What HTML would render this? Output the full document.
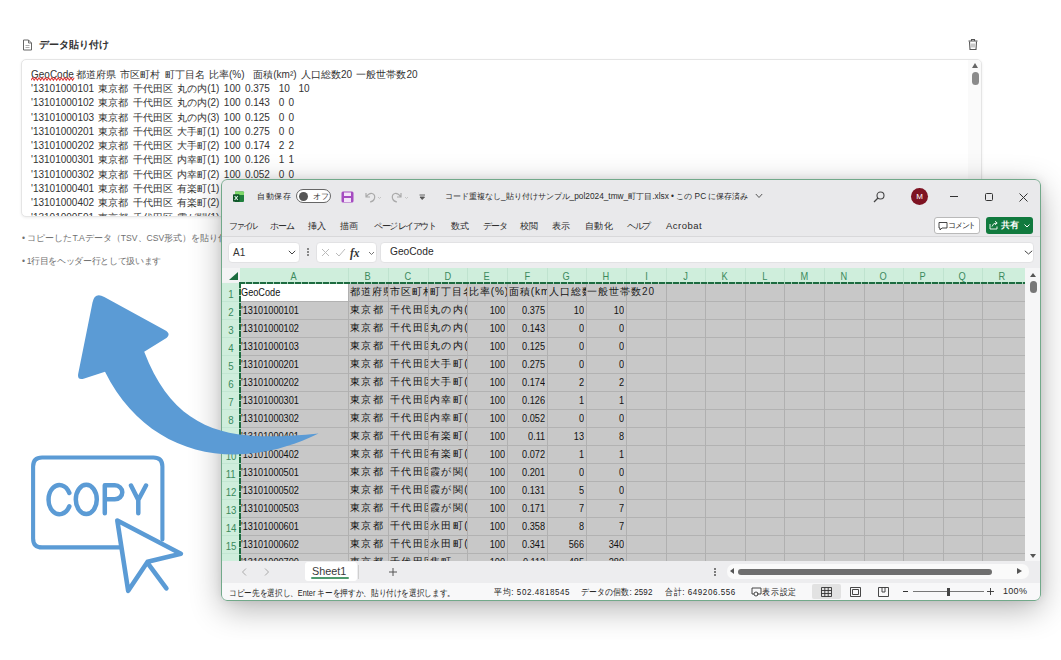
<!DOCTYPE html><html><head><meta charset="utf-8"><style>
*{margin:0;padding:0;box-sizing:border-box}
html,body{width:1061px;height:660px;overflow:hidden;background:#fff;font-family:"Liberation Sans", sans-serif;}
.a{position:absolute;white-space:nowrap}
</style></head><body>
<svg class="a" style="left:22px;top:39px" width="11" height="12" viewBox="0 0 11 12">
<path d="M1.5 1 H6.5 L9.5 4 V11 H1.5 Z" fill="none" stroke="#666" stroke-width="1"/>
<path d="M6.5 1 V4 H9.5" fill="none" stroke="#666" stroke-width="0.9"/>
<path d="M3.5 6.5 H7.5 M3.5 8.5 H7.5" stroke="#999" stroke-width="0.8"/></svg>
<div class="a" style="left:39px;top:38px;font-size:10px;font-weight:bold;color:#333;line-height:13px">データ貼り付け</div>
<svg class="a" style="left:967px;top:38px" width="12" height="13" viewBox="0 0 12 13">
<path d="M1.5 3 H10.5 M4.5 3 V1.5 H7.5 V3" fill="none" stroke="#555" stroke-width="1.1"/>
<path d="M2.5 3.5 L3 11.5 H9 L9.5 3.5" fill="none" stroke="#555" stroke-width="1.1"/>
<path d="M5 5.5 V9.5 M7 5.5 V9.5" stroke="#777" stroke-width="0.8"/></svg>
<div class="a" style="left:21px;top:59px;width:961px;height:158px;border:1px solid #e5e5e5;border-radius:5px;background:#fff;box-shadow:0 1px 3px rgba(0,0,0,0.07)"></div>
<div class="a" style="left:968px;top:60px;width:13px;height:156px;background:#fafafa;border-radius:0 4px 4px 0"></div>
<div class="a" style="left:972px;top:63px;width:0;height:0;border-left:3.5px solid transparent;border-right:3.5px solid transparent;border-bottom:5px solid #666"></div>
<div class="a" style="left:972px;top:72px;width:7px;height:13px;border-radius:4px;background:#8a8a8a"></div>
<div class="a" style="left:31px;top:67.7px;font-size:10px;line-height:14.3px;color:#333;word-spacing:1.6px;height:148.3px;overflow:hidden">GeoCode 都道府県 市区町村 町丁目名 比率(%)&nbsp; 面積(km²) 人口総数20 一般世帯数20<br>'13101000101 東京都 千代田区 丸の内(1) 100 0.375&nbsp; 10&nbsp; 10<br>'13101000102 東京都 千代田区 丸の内(2) 100 0.143&nbsp; 0 0<br>'13101000103 東京都 千代田区 丸の内(3) 100 0.125&nbsp; 0 0<br>'13101000201 東京都 千代田区 大手町(1) 100 0.275&nbsp; 0 0<br>'13101000202 東京都 千代田区 大手町(2) 100 0.174&nbsp; 2 2<br>'13101000301 東京都 千代田区 内幸町(1) 100 0.126&nbsp; 1 1<br>'13101000302 東京都 千代田区 内幸町(2) 100 0.052&nbsp; 0 0<br>'13101000401 東京都 千代田区 有楽町(1) 100 0.11&nbsp; 13 8<br>'13101000402 東京都 千代田区 有楽町(2) 100 0.072&nbsp; 1 1<br>'13101000501 東京都 千代田区 霞が関(1) 100 0.201&nbsp; 0 0</div>
<svg class="a" style="left:31px;top:77px" width="44" height="4.5" viewBox="0 0 44 4.5"><path d="M0 3.2 L1.6 0.8 L3.2 3.2 L4.8 0.8 L6.4 3.2 L8.0 0.8 L9.6 3.2 L11.2 0.8 L12.8 3.2 L14.4 0.8 L16.0 3.2 L17.6 0.8 L19.2 3.2 L20.8 0.8 L22.4 3.2 L24.0 0.8 L25.6 3.2 L27.2 0.8 L28.8 3.2 L30.4 0.8 L32.0 3.2 L33.6 0.8 L35.2 3.2 L36.8 0.8 L38.4 3.2 L40.0 0.8 L41.6 3.2 L43.2 0.8" fill="none" stroke="#e23b3b" stroke-width="1.1"/></svg>
<div class="a" style="left:22px;top:233px;font-size:8.6px;line-height:11px;color:#707070">• コピーしたT.Aデータ（TSV、CSV形式）を貼り付けてください</div>
<div class="a" style="left:22px;top:256px;font-size:8.6px;line-height:11px;color:#707070;letter-spacing:-0.35px">• 1行目をヘッダー行として扱います</div>
<div class="a" style="left:0;top:0;width:1061px;height:640px;overflow:hidden"><div class="a" style="left:222px;top:179px;width:819px;height:421px;border-radius:6px;box-shadow:0 9px 32px rgba(0,0,0,0.30),0 0 10px rgba(0,0,0,0.09)"></div></div>
<div class="a" style="left:221px;top:179px;width:820px;height:422px;border-radius:6px;overflow:hidden;background:#e9e9eb">
<div class="a" style="left:1px;top:0;width:819px;height:421px">
<div class="a" style="left:0;top:0;width:819px;height:57px;background:#e9e9eb"></div>
<svg class="a" style="left:11px;top:12px" width="12" height="12" viewBox="0 0 12 12">
<path d="M2 0.5 H10 Q11 0.5 11 1.5 V10 Q11 11 10 11 H2 Z" fill="#1f7f3c"/>
<path d="M2 0.5 H10 Q11 0.5 11 1.5 V4 H2 Z" fill="#7fd86a"/>
<rect x="0" y="3.3" width="6.5" height="7.4" rx="0.8" fill="#0d5226"/>
<path d="M1.6 5 L4.8 9 M4.8 5 L1.6 9" stroke="#d8f5e0" stroke-width="1.2"/></svg>
<div class="a" style="left:35px;top:12px;font-size:8px;line-height:11px;color:#2a2a2a;letter-spacing:0.5px">自動保存</div>
<div class="a" style="left:74px;top:10px;width:35px;height:14px;border:1px solid #666;border-radius:7px;background:#fff"></div>
<div class="a" style="left:76.5px;top:12.5px;width:9px;height:9px;border-radius:50%;background:#555"></div>
<div class="a" style="left:91px;top:12px;font-size:8px;line-height:11px;color:#333">オフ</div>
<svg class="a" style="left:119px;top:12px" width="13" height="12" viewBox="0 0 13 12">
<rect x="0.5" y="0.5" width="12" height="11" rx="1.5" fill="#a54bc1"/>
<rect x="3" y="1.5" width="7" height="3.5" fill="#f3e3f8"/>
<rect x="3" y="7" width="7" height="4" fill="#f3e3f8"/></svg>
<svg class="a" style="left:141px;top:11px" width="70" height="14" viewBox="0 0 70 14">
<path d="M3 3 V7 H7 M3 7 Q6 3 9 3.5 Q12.5 4.5 11.5 8.5 Q10.5 11.5 7 12" fill="none" stroke="#aaa" stroke-width="1.2"/>
<path d="M15 7 L16.5 8.5 L18 7" fill="none" stroke="#bbb" stroke-width="0.8"/>
<path d="M38 3 V7 H34 M38 7 Q35 3 32 3.5 Q28.5 4.5 29.5 8.5 Q30.5 11.5 34 12" fill="none" stroke="#aaa" stroke-width="1.2"/>
<path d="M42 7 L43.5 8.5 L45 7" fill="none" stroke="#bbb" stroke-width="0.8"/>
<path d="M56.5 5 H62 M57 7 L59.2 9.5 L61.5 7 Z" fill="#555" stroke="#555" stroke-width="0.9"/></svg>
<div class="a" style="left:223px;top:12px;font-size:8.3px;line-height:11px;color:#2a2a2a">コード重複なし_貼り付けサンプル_pol2024_tmw_町丁目.xlsx • この PC に保存済み</div>
<svg class="a" style="left:533px;top:14px" width="8" height="6" viewBox="0 0 8 6"><path d="M0.8 1 L4 4.5 L7.2 1" fill="none" stroke="#555" stroke-width="1"/></svg>
<svg class="a" style="left:651px;top:12px" width="12" height="12" viewBox="0 0 12 12">
<circle cx="7.5" cy="4.5" r="3.5" fill="none" stroke="#444" stroke-width="1.1"/><path d="M5 7 L1 11" stroke="#444" stroke-width="1.2"/></svg>
<div class="a" style="left:689px;top:9px;width:17px;height:17px;border-radius:50%;background:#7e1322;color:#fff;font-size:8px;line-height:17px;text-align:center">M</div>
<div class="a" style="left:728px;top:17px;width:8px;height:1px;background:#333"></div>
<div class="a" style="left:763px;top:14px;width:8px;height:8px;border:1px solid #333;border-radius:1.5px"></div>
<svg class="a" style="left:797px;top:14px" width="9" height="9" viewBox="0 0 9 9"><path d="M0.5 0.5 L8.5 8.5 M8.5 0.5 L0.5 8.5" stroke="#333" stroke-width="1"/></svg>
<div class="a" style="left:7px;top:41px;font-size:9px;line-height:12px;color:#2a2a2a;letter-spacing:-2.2px">ファイル</div>
<div class="a" style="left:48px;top:41px;font-size:9px;line-height:12px;color:#2a2a2a;letter-spacing:-1.2px">ホーム</div>
<div class="a" style="left:86px;top:41px;font-size:9px;line-height:12px;color:#2a2a2a;letter-spacing:0px">挿入</div>
<div class="a" style="left:118px;top:41px;font-size:9px;line-height:12px;color:#2a2a2a;letter-spacing:0px">描画</div>
<div class="a" style="left:152px;top:41px;font-size:9px;line-height:12px;color:#2a2a2a;letter-spacing:-1.5px">ページ レイアウト</div>
<div class="a" style="left:229px;top:41px;font-size:9px;line-height:12px;color:#2a2a2a;letter-spacing:0px">数式</div>
<div class="a" style="left:261px;top:41px;font-size:9px;line-height:12px;color:#2a2a2a;letter-spacing:-1px">データ</div>
<div class="a" style="left:298px;top:41px;font-size:9px;line-height:12px;color:#2a2a2a;letter-spacing:0px">校閲</div>
<div class="a" style="left:330px;top:41px;font-size:9px;line-height:12px;color:#2a2a2a;letter-spacing:0px">表示</div>
<div class="a" style="left:363px;top:41px;font-size:9px;line-height:12px;color:#2a2a2a;letter-spacing:0.4px">自動化</div>
<div class="a" style="left:405px;top:41px;font-size:9px;line-height:12px;color:#2a2a2a;letter-spacing:-1.3px">ヘルプ</div>
<div class="a" style="left:444px;top:41px;font-size:9.5px;line-height:12px;color:#2a2a2a;letter-spacing:0.5px">Acrobat</div>
<div class="a" style="left:712px;top:38px;width:46px;height:17px;border:1px solid #b9b9b9;border-radius:3px;background:#fff"></div>
<svg class="a" style="left:716px;top:42px" width="10" height="10" viewBox="0 0 10 10"><path d="M1 1.5 H9 V7 H4 L2 9 V7 H1 Z" fill="none" stroke="#333" stroke-width="0.9"/></svg>
<div class="a" style="left:726px;top:41px;font-size:8px;line-height:11px;color:#2a2a2a;letter-spacing:-1.2px">コメント</div>
<div class="a" style="left:764px;top:38px;width:47px;height:17px;border-radius:3px;background:#117a3e"></div>
<svg class="a" style="left:767px;top:41px" width="10" height="10" viewBox="0 0 10 10"><path d="M1 4 V9 H8 V6.5 M3 6.5 Q4 3 7.5 3 M6 1.2 L8.2 3 L6 4.8" fill="none" stroke="#fff" stroke-width="0.9"/></svg>
<div class="a" style="left:779px;top:40px;font-size:9px;font-weight:bold;line-height:12px;color:#fff">共有</div>
<svg class="a" style="left:802px;top:45px" width="6" height="4" viewBox="0 0 6 4"><path d="M0.5 0.5 L3 3 L5.5 0.5" fill="none" stroke="#fff" stroke-width="1"/></svg>
<div class="a" style="left:0;top:57px;width:819px;height:32px;background:#ededef;border-top:1px solid #d8d8da"></div>
<div class="a" style="left:6px;top:63px;width:72px;height:21px;border-radius:4px;background:#fff;border:1px solid #e2e2e4"></div>
<div class="a" style="left:11px;top:67px;font-size:10px;line-height:13px;color:#333">A1</div>
<svg class="a" style="left:66px;top:71px" width="8" height="5" viewBox="0 0 8 5"><path d="M0.8 0.8 L4 4 L7.2 0.8" fill="none" stroke="#444" stroke-width="1"/></svg>
<div class="a" style="left:85px;top:69px;width:2px;height:2px;background:#666;border-radius:1px;box-shadow:0 3px 0 #666,0 6px 0 #666"></div>
<div class="a" style="left:94px;top:63px;width:61px;height:21px;border-radius:4px;background:#fff;border:1px solid #e2e2e4"></div>
<svg class="a" style="left:97px;top:67px" width="56" height="14" viewBox="0 0 56 14">
<path d="M3 3 L10 10 M10 3 L3 10" stroke="#bbb" stroke-width="1"/>
<path d="M17 7 L20 10 L26 3" fill="none" stroke="#bbb" stroke-width="1"/>
<text x="31" y="11" font-family="Liberation Serif" font-style="italic" font-weight="bold" font-size="11.5" fill="#333">fx</text>
<path d="M50 6 L52.5 8.5 L55 6" fill="none" stroke="#666" stroke-width="0.9"/></svg>
<div class="a" style="left:158px;top:63px;width:654px;height:21px;border-radius:4px;background:#fff;border:1px solid #e2e2e4"></div>
<div class="a" style="left:168px;top:66px;font-size:10.2px;line-height:14px;color:#2a2a2a">GeoCode</div>
<svg class="a" style="left:802px;top:71px" width="9" height="5" viewBox="0 0 9 5"><path d="M0.8 0.8 L4.5 4 L8.2 0.8" fill="none" stroke="#444" stroke-width="1"/></svg>
<div class="a" style="left:0;top:89px;width:819px;height:293px;background:#f2f2f3"></div>
<div class="a" style="left:18px;top:89px;width:784.5px;height:14px;background:#cfeedc"></div>
<div class="a" style="left:0;top:89px;width:18px;height:14px;background:#f4f4f5"></div>
<div class="a" style="left:7px;top:93px;width:0;height:0;border-left:9px solid transparent;border-bottom:8px solid #1c6b3f"></div>
<div class="a" style="left:18.00px;top:91px;width:108.00px;font-size:10.5px;line-height:13px;color:#3a8a5c;text-align:center"><span style="display:inline-block;transform:scaleX(0.88)">A</span></div>
<div class="a" style="left:126.00px;top:91px;width:40.00px;font-size:10.5px;line-height:13px;color:#3a8a5c;text-align:center"><span style="display:inline-block;transform:scaleX(0.88)">B</span></div>
<div class="a" style="left:126px;top:89px;width:1px;height:14px;background:#bfe3cf"></div>
<div class="a" style="left:166.00px;top:91px;width:40.00px;font-size:10.5px;line-height:13px;color:#3a8a5c;text-align:center"><span style="display:inline-block;transform:scaleX(0.88)">C</span></div>
<div class="a" style="left:166px;top:89px;width:1px;height:14px;background:#bfe3cf"></div>
<div class="a" style="left:206.00px;top:91px;width:39.00px;font-size:10.5px;line-height:13px;color:#3a8a5c;text-align:center"><span style="display:inline-block;transform:scaleX(0.88)">D</span></div>
<div class="a" style="left:206px;top:89px;width:1px;height:14px;background:#bfe3cf"></div>
<div class="a" style="left:245.00px;top:91px;width:40.00px;font-size:10.5px;line-height:13px;color:#3a8a5c;text-align:center"><span style="display:inline-block;transform:scaleX(0.88)">E</span></div>
<div class="a" style="left:245px;top:89px;width:1px;height:14px;background:#bfe3cf"></div>
<div class="a" style="left:285.00px;top:91px;width:40.00px;font-size:10.5px;line-height:13px;color:#3a8a5c;text-align:center"><span style="display:inline-block;transform:scaleX(0.88)">F</span></div>
<div class="a" style="left:285px;top:89px;width:1px;height:14px;background:#bfe3cf"></div>
<div class="a" style="left:325.00px;top:91px;width:39.00px;font-size:10.5px;line-height:13px;color:#3a8a5c;text-align:center"><span style="display:inline-block;transform:scaleX(0.88)">G</span></div>
<div class="a" style="left:325px;top:89px;width:1px;height:14px;background:#bfe3cf"></div>
<div class="a" style="left:364.00px;top:91px;width:40.00px;font-size:10.5px;line-height:13px;color:#3a8a5c;text-align:center"><span style="display:inline-block;transform:scaleX(0.88)">H</span></div>
<div class="a" style="left:364px;top:89px;width:1px;height:14px;background:#bfe3cf"></div>
<div class="a" style="left:404.00px;top:91px;width:40.00px;font-size:10.5px;line-height:13px;color:#3a8a5c;text-align:center"><span style="display:inline-block;transform:scaleX(0.88)">I</span></div>
<div class="a" style="left:404px;top:89px;width:1px;height:14px;background:#bfe3cf"></div>
<div class="a" style="left:444.00px;top:91px;width:39.00px;font-size:10.5px;line-height:13px;color:#3a8a5c;text-align:center"><span style="display:inline-block;transform:scaleX(0.88)">J</span></div>
<div class="a" style="left:444px;top:89px;width:1px;height:14px;background:#bfe3cf"></div>
<div class="a" style="left:483.00px;top:91px;width:40.00px;font-size:10.5px;line-height:13px;color:#3a8a5c;text-align:center"><span style="display:inline-block;transform:scaleX(0.88)">K</span></div>
<div class="a" style="left:483px;top:89px;width:1px;height:14px;background:#bfe3cf"></div>
<div class="a" style="left:523.00px;top:91px;width:39.00px;font-size:10.5px;line-height:13px;color:#3a8a5c;text-align:center"><span style="display:inline-block;transform:scaleX(0.88)">L</span></div>
<div class="a" style="left:523px;top:89px;width:1px;height:14px;background:#bfe3cf"></div>
<div class="a" style="left:562.00px;top:91px;width:40.00px;font-size:10.5px;line-height:13px;color:#3a8a5c;text-align:center"><span style="display:inline-block;transform:scaleX(0.88)">M</span></div>
<div class="a" style="left:562px;top:89px;width:1px;height:14px;background:#bfe3cf"></div>
<div class="a" style="left:602.00px;top:91px;width:40.00px;font-size:10.5px;line-height:13px;color:#3a8a5c;text-align:center"><span style="display:inline-block;transform:scaleX(0.88)">N</span></div>
<div class="a" style="left:602px;top:89px;width:1px;height:14px;background:#bfe3cf"></div>
<div class="a" style="left:642.00px;top:91px;width:39.00px;font-size:10.5px;line-height:13px;color:#3a8a5c;text-align:center"><span style="display:inline-block;transform:scaleX(0.88)">O</span></div>
<div class="a" style="left:642px;top:89px;width:1px;height:14px;background:#bfe3cf"></div>
<div class="a" style="left:681.00px;top:91px;width:40.00px;font-size:10.5px;line-height:13px;color:#3a8a5c;text-align:center"><span style="display:inline-block;transform:scaleX(0.88)">P</span></div>
<div class="a" style="left:681px;top:89px;width:1px;height:14px;background:#bfe3cf"></div>
<div class="a" style="left:721.00px;top:91px;width:39.00px;font-size:10.5px;line-height:13px;color:#3a8a5c;text-align:center"><span style="display:inline-block;transform:scaleX(0.88)">Q</span></div>
<div class="a" style="left:721px;top:89px;width:1px;height:14px;background:#bfe3cf"></div>
<div class="a" style="left:760.00px;top:91px;width:40.00px;font-size:10.5px;line-height:13px;color:#3a8a5c;text-align:center"><span style="display:inline-block;transform:scaleX(0.88)">R</span></div>
<div class="a" style="left:760px;top:89px;width:1px;height:14px;background:#bfe3cf"></div>
<div class="a" style="left:0;top:104px;width:18px;height:278px;background:#cfeedc"></div>
<div class="a" style="left:18px;top:104px;width:784.5px;height:278px;background:#c8c8c8"></div>
<div class="a" style="left:18px;top:105px;width:108px;height:17px;background:#fff"></div>
<div class="a" style="left:0;top:122px;width:802.5px;height:1px;background:#b2b2b2"></div>
<div class="a" style="left:0;top:122px;width:18px;height:1px;background:#c2e6d2"></div>
<div class="a" style="left:0;top:140px;width:802.5px;height:1px;background:#b2b2b2"></div>
<div class="a" style="left:0;top:140px;width:18px;height:1px;background:#c2e6d2"></div>
<div class="a" style="left:0;top:158px;width:802.5px;height:1px;background:#b2b2b2"></div>
<div class="a" style="left:0;top:158px;width:18px;height:1px;background:#c2e6d2"></div>
<div class="a" style="left:0;top:176px;width:802.5px;height:1px;background:#b2b2b2"></div>
<div class="a" style="left:0;top:176px;width:18px;height:1px;background:#c2e6d2"></div>
<div class="a" style="left:0;top:194px;width:802.5px;height:1px;background:#b2b2b2"></div>
<div class="a" style="left:0;top:194px;width:18px;height:1px;background:#c2e6d2"></div>
<div class="a" style="left:0;top:212px;width:802.5px;height:1px;background:#b2b2b2"></div>
<div class="a" style="left:0;top:212px;width:18px;height:1px;background:#c2e6d2"></div>
<div class="a" style="left:0;top:230px;width:802.5px;height:1px;background:#b2b2b2"></div>
<div class="a" style="left:0;top:230px;width:18px;height:1px;background:#c2e6d2"></div>
<div class="a" style="left:0;top:248px;width:802.5px;height:1px;background:#b2b2b2"></div>
<div class="a" style="left:0;top:248px;width:18px;height:1px;background:#c2e6d2"></div>
<div class="a" style="left:0;top:266px;width:802.5px;height:1px;background:#b2b2b2"></div>
<div class="a" style="left:0;top:266px;width:18px;height:1px;background:#c2e6d2"></div>
<div class="a" style="left:0;top:284px;width:802.5px;height:1px;background:#b2b2b2"></div>
<div class="a" style="left:0;top:284px;width:18px;height:1px;background:#c2e6d2"></div>
<div class="a" style="left:0;top:302px;width:802.5px;height:1px;background:#b2b2b2"></div>
<div class="a" style="left:0;top:302px;width:18px;height:1px;background:#c2e6d2"></div>
<div class="a" style="left:0;top:320px;width:802.5px;height:1px;background:#b2b2b2"></div>
<div class="a" style="left:0;top:320px;width:18px;height:1px;background:#c2e6d2"></div>
<div class="a" style="left:0;top:338px;width:802.5px;height:1px;background:#b2b2b2"></div>
<div class="a" style="left:0;top:338px;width:18px;height:1px;background:#c2e6d2"></div>
<div class="a" style="left:0;top:356px;width:802.5px;height:1px;background:#b2b2b2"></div>
<div class="a" style="left:0;top:356px;width:18px;height:1px;background:#c2e6d2"></div>
<div class="a" style="left:0;top:374px;width:802.5px;height:1px;background:#b2b2b2"></div>
<div class="a" style="left:0;top:374px;width:18px;height:1px;background:#c2e6d2"></div>
<div class="a" style="left:126px;top:104px;width:1px;height:278px;background:#b0b0b0"></div>
<div class="a" style="left:166px;top:104px;width:1px;height:278px;background:#b0b0b0"></div>
<div class="a" style="left:206px;top:104px;width:1px;height:278px;background:#b0b0b0"></div>
<div class="a" style="left:245px;top:104px;width:1px;height:278px;background:#b0b0b0"></div>
<div class="a" style="left:285px;top:104px;width:1px;height:278px;background:#b0b0b0"></div>
<div class="a" style="left:325px;top:104px;width:1px;height:278px;background:#b0b0b0"></div>
<div class="a" style="left:364px;top:104px;width:1px;height:278px;background:#b0b0b0"></div>
<div class="a" style="left:404px;top:104px;width:1px;height:278px;background:#b0b0b0"></div>
<div class="a" style="left:444px;top:104px;width:1px;height:278px;background:#b0b0b0"></div>
<div class="a" style="left:483px;top:104px;width:1px;height:278px;background:#b0b0b0"></div>
<div class="a" style="left:523px;top:104px;width:1px;height:278px;background:#b0b0b0"></div>
<div class="a" style="left:562px;top:104px;width:1px;height:278px;background:#b0b0b0"></div>
<div class="a" style="left:602px;top:104px;width:1px;height:278px;background:#b0b0b0"></div>
<div class="a" style="left:642px;top:104px;width:1px;height:278px;background:#b0b0b0"></div>
<div class="a" style="left:681px;top:104px;width:1px;height:278px;background:#b0b0b0"></div>
<div class="a" style="left:721px;top:104px;width:1px;height:278px;background:#b0b0b0"></div>
<div class="a" style="left:760px;top:104px;width:1px;height:278px;background:#b0b0b0"></div>
<div class="a" style="left:0;top:108.5px;width:18px;font-size:11px;line-height:13px;color:#3a8a5c;text-align:center"><span style="display:inline-block;transform:scaleX(0.88)">1</span></div>
<div class="a" style="left:0;top:126.5px;width:18px;font-size:11px;line-height:13px;color:#3a8a5c;text-align:center"><span style="display:inline-block;transform:scaleX(0.88)">2</span></div>
<div class="a" style="left:0;top:144.5px;width:18px;font-size:11px;line-height:13px;color:#3a8a5c;text-align:center"><span style="display:inline-block;transform:scaleX(0.88)">3</span></div>
<div class="a" style="left:0;top:162.5px;width:18px;font-size:11px;line-height:13px;color:#3a8a5c;text-align:center"><span style="display:inline-block;transform:scaleX(0.88)">4</span></div>
<div class="a" style="left:0;top:180.5px;width:18px;font-size:11px;line-height:13px;color:#3a8a5c;text-align:center"><span style="display:inline-block;transform:scaleX(0.88)">5</span></div>
<div class="a" style="left:0;top:198.5px;width:18px;font-size:11px;line-height:13px;color:#3a8a5c;text-align:center"><span style="display:inline-block;transform:scaleX(0.88)">6</span></div>
<div class="a" style="left:0;top:216.5px;width:18px;font-size:11px;line-height:13px;color:#3a8a5c;text-align:center"><span style="display:inline-block;transform:scaleX(0.88)">7</span></div>
<div class="a" style="left:0;top:234.5px;width:18px;font-size:11px;line-height:13px;color:#3a8a5c;text-align:center"><span style="display:inline-block;transform:scaleX(0.88)">8</span></div>
<div class="a" style="left:0;top:252.5px;width:18px;font-size:11px;line-height:13px;color:#3a8a5c;text-align:center"><span style="display:inline-block;transform:scaleX(0.88)">9</span></div>
<div class="a" style="left:0;top:270.5px;width:18px;font-size:11px;line-height:13px;color:#3a8a5c;text-align:center"><span style="display:inline-block;transform:scaleX(0.88)">10</span></div>
<div class="a" style="left:0;top:288.5px;width:18px;font-size:11px;line-height:13px;color:#3a8a5c;text-align:center"><span style="display:inline-block;transform:scaleX(0.88)">11</span></div>
<div class="a" style="left:0;top:306.5px;width:18px;font-size:11px;line-height:13px;color:#3a8a5c;text-align:center"><span style="display:inline-block;transform:scaleX(0.88)">12</span></div>
<div class="a" style="left:0;top:324.5px;width:18px;font-size:11px;line-height:13px;color:#3a8a5c;text-align:center"><span style="display:inline-block;transform:scaleX(0.88)">13</span></div>
<div class="a" style="left:0;top:342.5px;width:18px;font-size:11px;line-height:13px;color:#3a8a5c;text-align:center"><span style="display:inline-block;transform:scaleX(0.88)">14</span></div>
<div class="a" style="left:0;top:360.5px;width:18px;font-size:11px;line-height:13px;color:#3a8a5c;text-align:center"><span style="display:inline-block;transform:scaleX(0.88)">15</span></div>
<div class="a" style="left:19.00px;top:106px;width:107.00px;font-size:10.8px;line-height:14px;color:#111;overflow:hidden"><span style="display:inline-block;transform:scaleX(0.85);transform-origin:0 50%">GeoCode</span></div>
<div class="a" style="left:127.00px;top:106px;width:39.00px;font-size:10px;line-height:14px;color:#111;overflow:hidden"><span style="display:inline-block;margin-left:1px;letter-spacing:0.9px">都道府県</span></div>
<div class="a" style="left:167.00px;top:106px;width:39.00px;font-size:10px;line-height:14px;color:#111;overflow:hidden"><span style="display:inline-block;margin-left:1px;letter-spacing:0.9px">市区町村</span></div>
<div class="a" style="left:207.00px;top:106px;width:38.00px;font-size:10px;line-height:14px;color:#111;overflow:hidden"><span style="display:inline-block;margin-left:1px;letter-spacing:0.9px">町丁目名</span></div>
<div class="a" style="left:246.00px;top:106px;width:39.00px;font-size:10px;line-height:14px;color:#111;overflow:hidden"><span style="display:inline-block;margin-left:1px;letter-spacing:0.9px">比率(%)</span></div>
<div class="a" style="left:286.00px;top:106px;width:39.00px;font-size:10px;line-height:14px;color:#111;overflow:hidden"><span style="display:inline-block;margin-left:1px;letter-spacing:0.9px">面積(km²)</span></div>
<div class="a" style="left:326.00px;top:106px;width:38.00px;font-size:10px;line-height:14px;color:#111;overflow:hidden"><span style="display:inline-block;margin-left:1px;letter-spacing:0.9px">人口総数20</span></div>
<div class="a" style="left:365.00px;top:106px;font-size:10px;line-height:14px;color:#222;letter-spacing:1px">一般世帯数20</div>
<div class="a" style="left:19.00px;top:124px;width:107.00px;font-size:10.8px;line-height:14px;color:#111;overflow:hidden"><span style="display:inline-block;transform:scaleX(0.85);transform-origin:0 50%">'13101000101</span></div>
<div class="a" style="left:127.00px;top:124px;width:39.00px;font-size:10px;line-height:14px;color:#111;overflow:hidden"><span style="display:inline-block;margin-left:1px;letter-spacing:1.4px">東京都</span></div>
<div class="a" style="left:167.00px;top:124px;width:39.00px;font-size:10px;line-height:14px;color:#111;overflow:hidden"><span style="display:inline-block;margin-left:1px;letter-spacing:1.4px">千代田区</span></div>
<div class="a" style="left:207.00px;top:124px;width:38.00px;font-size:10px;line-height:14px;color:#111;overflow:hidden"><span style="display:inline-block;margin-left:1px;letter-spacing:1.4px">丸の内(1)</span></div>
<div class="a" style="left:245.00px;top:124px;width:38.00px;font-size:10.8px;line-height:14px;color:#111;text-align:right;overflow:hidden"><span style="display:inline-block;transform:scaleX(0.85);transform-origin:100% 50%">100</span></div>
<div class="a" style="left:285.00px;top:124px;width:38.00px;font-size:10.8px;line-height:14px;color:#111;text-align:right;overflow:hidden"><span style="display:inline-block;transform:scaleX(0.85);transform-origin:100% 50%">0.375</span></div>
<div class="a" style="left:325.00px;top:124px;width:37.00px;font-size:10.8px;line-height:14px;color:#111;text-align:right;overflow:hidden"><span style="display:inline-block;transform:scaleX(0.85);transform-origin:100% 50%">10</span></div>
<div class="a" style="left:364.00px;top:124px;width:38.00px;font-size:10.8px;line-height:14px;color:#111;text-align:right;overflow:hidden"><span style="display:inline-block;transform:scaleX(0.85);transform-origin:100% 50%">10</span></div>
<div class="a" style="left:19.00px;top:142px;width:107.00px;font-size:10.8px;line-height:14px;color:#111;overflow:hidden"><span style="display:inline-block;transform:scaleX(0.85);transform-origin:0 50%">'13101000102</span></div>
<div class="a" style="left:127.00px;top:142px;width:39.00px;font-size:10px;line-height:14px;color:#111;overflow:hidden"><span style="display:inline-block;margin-left:1px;letter-spacing:1.4px">東京都</span></div>
<div class="a" style="left:167.00px;top:142px;width:39.00px;font-size:10px;line-height:14px;color:#111;overflow:hidden"><span style="display:inline-block;margin-left:1px;letter-spacing:1.4px">千代田区</span></div>
<div class="a" style="left:207.00px;top:142px;width:38.00px;font-size:10px;line-height:14px;color:#111;overflow:hidden"><span style="display:inline-block;margin-left:1px;letter-spacing:1.4px">丸の内(2)</span></div>
<div class="a" style="left:245.00px;top:142px;width:38.00px;font-size:10.8px;line-height:14px;color:#111;text-align:right;overflow:hidden"><span style="display:inline-block;transform:scaleX(0.85);transform-origin:100% 50%">100</span></div>
<div class="a" style="left:285.00px;top:142px;width:38.00px;font-size:10.8px;line-height:14px;color:#111;text-align:right;overflow:hidden"><span style="display:inline-block;transform:scaleX(0.85);transform-origin:100% 50%">0.143</span></div>
<div class="a" style="left:325.00px;top:142px;width:37.00px;font-size:10.8px;line-height:14px;color:#111;text-align:right;overflow:hidden"><span style="display:inline-block;transform:scaleX(0.85);transform-origin:100% 50%">0</span></div>
<div class="a" style="left:364.00px;top:142px;width:38.00px;font-size:10.8px;line-height:14px;color:#111;text-align:right;overflow:hidden"><span style="display:inline-block;transform:scaleX(0.85);transform-origin:100% 50%">0</span></div>
<div class="a" style="left:19.00px;top:160px;width:107.00px;font-size:10.8px;line-height:14px;color:#111;overflow:hidden"><span style="display:inline-block;transform:scaleX(0.85);transform-origin:0 50%">'13101000103</span></div>
<div class="a" style="left:127.00px;top:160px;width:39.00px;font-size:10px;line-height:14px;color:#111;overflow:hidden"><span style="display:inline-block;margin-left:1px;letter-spacing:1.4px">東京都</span></div>
<div class="a" style="left:167.00px;top:160px;width:39.00px;font-size:10px;line-height:14px;color:#111;overflow:hidden"><span style="display:inline-block;margin-left:1px;letter-spacing:1.4px">千代田区</span></div>
<div class="a" style="left:207.00px;top:160px;width:38.00px;font-size:10px;line-height:14px;color:#111;overflow:hidden"><span style="display:inline-block;margin-left:1px;letter-spacing:1.4px">丸の内(3)</span></div>
<div class="a" style="left:245.00px;top:160px;width:38.00px;font-size:10.8px;line-height:14px;color:#111;text-align:right;overflow:hidden"><span style="display:inline-block;transform:scaleX(0.85);transform-origin:100% 50%">100</span></div>
<div class="a" style="left:285.00px;top:160px;width:38.00px;font-size:10.8px;line-height:14px;color:#111;text-align:right;overflow:hidden"><span style="display:inline-block;transform:scaleX(0.85);transform-origin:100% 50%">0.125</span></div>
<div class="a" style="left:325.00px;top:160px;width:37.00px;font-size:10.8px;line-height:14px;color:#111;text-align:right;overflow:hidden"><span style="display:inline-block;transform:scaleX(0.85);transform-origin:100% 50%">0</span></div>
<div class="a" style="left:364.00px;top:160px;width:38.00px;font-size:10.8px;line-height:14px;color:#111;text-align:right;overflow:hidden"><span style="display:inline-block;transform:scaleX(0.85);transform-origin:100% 50%">0</span></div>
<div class="a" style="left:19.00px;top:178px;width:107.00px;font-size:10.8px;line-height:14px;color:#111;overflow:hidden"><span style="display:inline-block;transform:scaleX(0.85);transform-origin:0 50%">'13101000201</span></div>
<div class="a" style="left:127.00px;top:178px;width:39.00px;font-size:10px;line-height:14px;color:#111;overflow:hidden"><span style="display:inline-block;margin-left:1px;letter-spacing:1.4px">東京都</span></div>
<div class="a" style="left:167.00px;top:178px;width:39.00px;font-size:10px;line-height:14px;color:#111;overflow:hidden"><span style="display:inline-block;margin-left:1px;letter-spacing:1.4px">千代田区</span></div>
<div class="a" style="left:207.00px;top:178px;width:38.00px;font-size:10px;line-height:14px;color:#111;overflow:hidden"><span style="display:inline-block;margin-left:1px;letter-spacing:1.4px">大手町(1)</span></div>
<div class="a" style="left:245.00px;top:178px;width:38.00px;font-size:10.8px;line-height:14px;color:#111;text-align:right;overflow:hidden"><span style="display:inline-block;transform:scaleX(0.85);transform-origin:100% 50%">100</span></div>
<div class="a" style="left:285.00px;top:178px;width:38.00px;font-size:10.8px;line-height:14px;color:#111;text-align:right;overflow:hidden"><span style="display:inline-block;transform:scaleX(0.85);transform-origin:100% 50%">0.275</span></div>
<div class="a" style="left:325.00px;top:178px;width:37.00px;font-size:10.8px;line-height:14px;color:#111;text-align:right;overflow:hidden"><span style="display:inline-block;transform:scaleX(0.85);transform-origin:100% 50%">0</span></div>
<div class="a" style="left:364.00px;top:178px;width:38.00px;font-size:10.8px;line-height:14px;color:#111;text-align:right;overflow:hidden"><span style="display:inline-block;transform:scaleX(0.85);transform-origin:100% 50%">0</span></div>
<div class="a" style="left:19.00px;top:196px;width:107.00px;font-size:10.8px;line-height:14px;color:#111;overflow:hidden"><span style="display:inline-block;transform:scaleX(0.85);transform-origin:0 50%">'13101000202</span></div>
<div class="a" style="left:127.00px;top:196px;width:39.00px;font-size:10px;line-height:14px;color:#111;overflow:hidden"><span style="display:inline-block;margin-left:1px;letter-spacing:1.4px">東京都</span></div>
<div class="a" style="left:167.00px;top:196px;width:39.00px;font-size:10px;line-height:14px;color:#111;overflow:hidden"><span style="display:inline-block;margin-left:1px;letter-spacing:1.4px">千代田区</span></div>
<div class="a" style="left:207.00px;top:196px;width:38.00px;font-size:10px;line-height:14px;color:#111;overflow:hidden"><span style="display:inline-block;margin-left:1px;letter-spacing:1.4px">大手町(2)</span></div>
<div class="a" style="left:245.00px;top:196px;width:38.00px;font-size:10.8px;line-height:14px;color:#111;text-align:right;overflow:hidden"><span style="display:inline-block;transform:scaleX(0.85);transform-origin:100% 50%">100</span></div>
<div class="a" style="left:285.00px;top:196px;width:38.00px;font-size:10.8px;line-height:14px;color:#111;text-align:right;overflow:hidden"><span style="display:inline-block;transform:scaleX(0.85);transform-origin:100% 50%">0.174</span></div>
<div class="a" style="left:325.00px;top:196px;width:37.00px;font-size:10.8px;line-height:14px;color:#111;text-align:right;overflow:hidden"><span style="display:inline-block;transform:scaleX(0.85);transform-origin:100% 50%">2</span></div>
<div class="a" style="left:364.00px;top:196px;width:38.00px;font-size:10.8px;line-height:14px;color:#111;text-align:right;overflow:hidden"><span style="display:inline-block;transform:scaleX(0.85);transform-origin:100% 50%">2</span></div>
<div class="a" style="left:19.00px;top:214px;width:107.00px;font-size:10.8px;line-height:14px;color:#111;overflow:hidden"><span style="display:inline-block;transform:scaleX(0.85);transform-origin:0 50%">'13101000301</span></div>
<div class="a" style="left:127.00px;top:214px;width:39.00px;font-size:10px;line-height:14px;color:#111;overflow:hidden"><span style="display:inline-block;margin-left:1px;letter-spacing:1.4px">東京都</span></div>
<div class="a" style="left:167.00px;top:214px;width:39.00px;font-size:10px;line-height:14px;color:#111;overflow:hidden"><span style="display:inline-block;margin-left:1px;letter-spacing:1.4px">千代田区</span></div>
<div class="a" style="left:207.00px;top:214px;width:38.00px;font-size:10px;line-height:14px;color:#111;overflow:hidden"><span style="display:inline-block;margin-left:1px;letter-spacing:1.4px">内幸町(1)</span></div>
<div class="a" style="left:245.00px;top:214px;width:38.00px;font-size:10.8px;line-height:14px;color:#111;text-align:right;overflow:hidden"><span style="display:inline-block;transform:scaleX(0.85);transform-origin:100% 50%">100</span></div>
<div class="a" style="left:285.00px;top:214px;width:38.00px;font-size:10.8px;line-height:14px;color:#111;text-align:right;overflow:hidden"><span style="display:inline-block;transform:scaleX(0.85);transform-origin:100% 50%">0.126</span></div>
<div class="a" style="left:325.00px;top:214px;width:37.00px;font-size:10.8px;line-height:14px;color:#111;text-align:right;overflow:hidden"><span style="display:inline-block;transform:scaleX(0.85);transform-origin:100% 50%">1</span></div>
<div class="a" style="left:364.00px;top:214px;width:38.00px;font-size:10.8px;line-height:14px;color:#111;text-align:right;overflow:hidden"><span style="display:inline-block;transform:scaleX(0.85);transform-origin:100% 50%">1</span></div>
<div class="a" style="left:19.00px;top:232px;width:107.00px;font-size:10.8px;line-height:14px;color:#111;overflow:hidden"><span style="display:inline-block;transform:scaleX(0.85);transform-origin:0 50%">'13101000302</span></div>
<div class="a" style="left:127.00px;top:232px;width:39.00px;font-size:10px;line-height:14px;color:#111;overflow:hidden"><span style="display:inline-block;margin-left:1px;letter-spacing:1.4px">東京都</span></div>
<div class="a" style="left:167.00px;top:232px;width:39.00px;font-size:10px;line-height:14px;color:#111;overflow:hidden"><span style="display:inline-block;margin-left:1px;letter-spacing:1.4px">千代田区</span></div>
<div class="a" style="left:207.00px;top:232px;width:38.00px;font-size:10px;line-height:14px;color:#111;overflow:hidden"><span style="display:inline-block;margin-left:1px;letter-spacing:1.4px">内幸町(2)</span></div>
<div class="a" style="left:245.00px;top:232px;width:38.00px;font-size:10.8px;line-height:14px;color:#111;text-align:right;overflow:hidden"><span style="display:inline-block;transform:scaleX(0.85);transform-origin:100% 50%">100</span></div>
<div class="a" style="left:285.00px;top:232px;width:38.00px;font-size:10.8px;line-height:14px;color:#111;text-align:right;overflow:hidden"><span style="display:inline-block;transform:scaleX(0.85);transform-origin:100% 50%">0.052</span></div>
<div class="a" style="left:325.00px;top:232px;width:37.00px;font-size:10.8px;line-height:14px;color:#111;text-align:right;overflow:hidden"><span style="display:inline-block;transform:scaleX(0.85);transform-origin:100% 50%">0</span></div>
<div class="a" style="left:364.00px;top:232px;width:38.00px;font-size:10.8px;line-height:14px;color:#111;text-align:right;overflow:hidden"><span style="display:inline-block;transform:scaleX(0.85);transform-origin:100% 50%">0</span></div>
<div class="a" style="left:19.00px;top:250px;width:107.00px;font-size:10.8px;line-height:14px;color:#111;overflow:hidden"><span style="display:inline-block;transform:scaleX(0.85);transform-origin:0 50%">'13101000401</span></div>
<div class="a" style="left:127.00px;top:250px;width:39.00px;font-size:10px;line-height:14px;color:#111;overflow:hidden"><span style="display:inline-block;margin-left:1px;letter-spacing:1.4px">東京都</span></div>
<div class="a" style="left:167.00px;top:250px;width:39.00px;font-size:10px;line-height:14px;color:#111;overflow:hidden"><span style="display:inline-block;margin-left:1px;letter-spacing:1.4px">千代田区</span></div>
<div class="a" style="left:207.00px;top:250px;width:38.00px;font-size:10px;line-height:14px;color:#111;overflow:hidden"><span style="display:inline-block;margin-left:1px;letter-spacing:1.4px">有楽町(1)</span></div>
<div class="a" style="left:245.00px;top:250px;width:38.00px;font-size:10.8px;line-height:14px;color:#111;text-align:right;overflow:hidden"><span style="display:inline-block;transform:scaleX(0.85);transform-origin:100% 50%">100</span></div>
<div class="a" style="left:285.00px;top:250px;width:38.00px;font-size:10.8px;line-height:14px;color:#111;text-align:right;overflow:hidden"><span style="display:inline-block;transform:scaleX(0.85);transform-origin:100% 50%">0.11</span></div>
<div class="a" style="left:325.00px;top:250px;width:37.00px;font-size:10.8px;line-height:14px;color:#111;text-align:right;overflow:hidden"><span style="display:inline-block;transform:scaleX(0.85);transform-origin:100% 50%">13</span></div>
<div class="a" style="left:364.00px;top:250px;width:38.00px;font-size:10.8px;line-height:14px;color:#111;text-align:right;overflow:hidden"><span style="display:inline-block;transform:scaleX(0.85);transform-origin:100% 50%">8</span></div>
<div class="a" style="left:19.00px;top:268px;width:107.00px;font-size:10.8px;line-height:14px;color:#111;overflow:hidden"><span style="display:inline-block;transform:scaleX(0.85);transform-origin:0 50%">'13101000402</span></div>
<div class="a" style="left:127.00px;top:268px;width:39.00px;font-size:10px;line-height:14px;color:#111;overflow:hidden"><span style="display:inline-block;margin-left:1px;letter-spacing:1.4px">東京都</span></div>
<div class="a" style="left:167.00px;top:268px;width:39.00px;font-size:10px;line-height:14px;color:#111;overflow:hidden"><span style="display:inline-block;margin-left:1px;letter-spacing:1.4px">千代田区</span></div>
<div class="a" style="left:207.00px;top:268px;width:38.00px;font-size:10px;line-height:14px;color:#111;overflow:hidden"><span style="display:inline-block;margin-left:1px;letter-spacing:1.4px">有楽町(2)</span></div>
<div class="a" style="left:245.00px;top:268px;width:38.00px;font-size:10.8px;line-height:14px;color:#111;text-align:right;overflow:hidden"><span style="display:inline-block;transform:scaleX(0.85);transform-origin:100% 50%">100</span></div>
<div class="a" style="left:285.00px;top:268px;width:38.00px;font-size:10.8px;line-height:14px;color:#111;text-align:right;overflow:hidden"><span style="display:inline-block;transform:scaleX(0.85);transform-origin:100% 50%">0.072</span></div>
<div class="a" style="left:325.00px;top:268px;width:37.00px;font-size:10.8px;line-height:14px;color:#111;text-align:right;overflow:hidden"><span style="display:inline-block;transform:scaleX(0.85);transform-origin:100% 50%">1</span></div>
<div class="a" style="left:364.00px;top:268px;width:38.00px;font-size:10.8px;line-height:14px;color:#111;text-align:right;overflow:hidden"><span style="display:inline-block;transform:scaleX(0.85);transform-origin:100% 50%">1</span></div>
<div class="a" style="left:19.00px;top:286px;width:107.00px;font-size:10.8px;line-height:14px;color:#111;overflow:hidden"><span style="display:inline-block;transform:scaleX(0.85);transform-origin:0 50%">'13101000501</span></div>
<div class="a" style="left:127.00px;top:286px;width:39.00px;font-size:10px;line-height:14px;color:#111;overflow:hidden"><span style="display:inline-block;margin-left:1px;letter-spacing:1.4px">東京都</span></div>
<div class="a" style="left:167.00px;top:286px;width:39.00px;font-size:10px;line-height:14px;color:#111;overflow:hidden"><span style="display:inline-block;margin-left:1px;letter-spacing:1.4px">千代田区</span></div>
<div class="a" style="left:207.00px;top:286px;width:38.00px;font-size:10px;line-height:14px;color:#111;overflow:hidden"><span style="display:inline-block;margin-left:1px;letter-spacing:1.4px">霞が関(1)</span></div>
<div class="a" style="left:245.00px;top:286px;width:38.00px;font-size:10.8px;line-height:14px;color:#111;text-align:right;overflow:hidden"><span style="display:inline-block;transform:scaleX(0.85);transform-origin:100% 50%">100</span></div>
<div class="a" style="left:285.00px;top:286px;width:38.00px;font-size:10.8px;line-height:14px;color:#111;text-align:right;overflow:hidden"><span style="display:inline-block;transform:scaleX(0.85);transform-origin:100% 50%">0.201</span></div>
<div class="a" style="left:325.00px;top:286px;width:37.00px;font-size:10.8px;line-height:14px;color:#111;text-align:right;overflow:hidden"><span style="display:inline-block;transform:scaleX(0.85);transform-origin:100% 50%">0</span></div>
<div class="a" style="left:364.00px;top:286px;width:38.00px;font-size:10.8px;line-height:14px;color:#111;text-align:right;overflow:hidden"><span style="display:inline-block;transform:scaleX(0.85);transform-origin:100% 50%">0</span></div>
<div class="a" style="left:19.00px;top:304px;width:107.00px;font-size:10.8px;line-height:14px;color:#111;overflow:hidden"><span style="display:inline-block;transform:scaleX(0.85);transform-origin:0 50%">'13101000502</span></div>
<div class="a" style="left:127.00px;top:304px;width:39.00px;font-size:10px;line-height:14px;color:#111;overflow:hidden"><span style="display:inline-block;margin-left:1px;letter-spacing:1.4px">東京都</span></div>
<div class="a" style="left:167.00px;top:304px;width:39.00px;font-size:10px;line-height:14px;color:#111;overflow:hidden"><span style="display:inline-block;margin-left:1px;letter-spacing:1.4px">千代田区</span></div>
<div class="a" style="left:207.00px;top:304px;width:38.00px;font-size:10px;line-height:14px;color:#111;overflow:hidden"><span style="display:inline-block;margin-left:1px;letter-spacing:1.4px">霞が関(2)</span></div>
<div class="a" style="left:245.00px;top:304px;width:38.00px;font-size:10.8px;line-height:14px;color:#111;text-align:right;overflow:hidden"><span style="display:inline-block;transform:scaleX(0.85);transform-origin:100% 50%">100</span></div>
<div class="a" style="left:285.00px;top:304px;width:38.00px;font-size:10.8px;line-height:14px;color:#111;text-align:right;overflow:hidden"><span style="display:inline-block;transform:scaleX(0.85);transform-origin:100% 50%">0.131</span></div>
<div class="a" style="left:325.00px;top:304px;width:37.00px;font-size:10.8px;line-height:14px;color:#111;text-align:right;overflow:hidden"><span style="display:inline-block;transform:scaleX(0.85);transform-origin:100% 50%">5</span></div>
<div class="a" style="left:364.00px;top:304px;width:38.00px;font-size:10.8px;line-height:14px;color:#111;text-align:right;overflow:hidden"><span style="display:inline-block;transform:scaleX(0.85);transform-origin:100% 50%">0</span></div>
<div class="a" style="left:19.00px;top:322px;width:107.00px;font-size:10.8px;line-height:14px;color:#111;overflow:hidden"><span style="display:inline-block;transform:scaleX(0.85);transform-origin:0 50%">'13101000503</span></div>
<div class="a" style="left:127.00px;top:322px;width:39.00px;font-size:10px;line-height:14px;color:#111;overflow:hidden"><span style="display:inline-block;margin-left:1px;letter-spacing:1.4px">東京都</span></div>
<div class="a" style="left:167.00px;top:322px;width:39.00px;font-size:10px;line-height:14px;color:#111;overflow:hidden"><span style="display:inline-block;margin-left:1px;letter-spacing:1.4px">千代田区</span></div>
<div class="a" style="left:207.00px;top:322px;width:38.00px;font-size:10px;line-height:14px;color:#111;overflow:hidden"><span style="display:inline-block;margin-left:1px;letter-spacing:1.4px">霞が関(3)</span></div>
<div class="a" style="left:245.00px;top:322px;width:38.00px;font-size:10.8px;line-height:14px;color:#111;text-align:right;overflow:hidden"><span style="display:inline-block;transform:scaleX(0.85);transform-origin:100% 50%">100</span></div>
<div class="a" style="left:285.00px;top:322px;width:38.00px;font-size:10.8px;line-height:14px;color:#111;text-align:right;overflow:hidden"><span style="display:inline-block;transform:scaleX(0.85);transform-origin:100% 50%">0.171</span></div>
<div class="a" style="left:325.00px;top:322px;width:37.00px;font-size:10.8px;line-height:14px;color:#111;text-align:right;overflow:hidden"><span style="display:inline-block;transform:scaleX(0.85);transform-origin:100% 50%">7</span></div>
<div class="a" style="left:364.00px;top:322px;width:38.00px;font-size:10.8px;line-height:14px;color:#111;text-align:right;overflow:hidden"><span style="display:inline-block;transform:scaleX(0.85);transform-origin:100% 50%">7</span></div>
<div class="a" style="left:19.00px;top:340px;width:107.00px;font-size:10.8px;line-height:14px;color:#111;overflow:hidden"><span style="display:inline-block;transform:scaleX(0.85);transform-origin:0 50%">'13101000601</span></div>
<div class="a" style="left:127.00px;top:340px;width:39.00px;font-size:10px;line-height:14px;color:#111;overflow:hidden"><span style="display:inline-block;margin-left:1px;letter-spacing:1.4px">東京都</span></div>
<div class="a" style="left:167.00px;top:340px;width:39.00px;font-size:10px;line-height:14px;color:#111;overflow:hidden"><span style="display:inline-block;margin-left:1px;letter-spacing:1.4px">千代田区</span></div>
<div class="a" style="left:207.00px;top:340px;width:38.00px;font-size:10px;line-height:14px;color:#111;overflow:hidden"><span style="display:inline-block;margin-left:1px;letter-spacing:1.4px">永田町(1)</span></div>
<div class="a" style="left:245.00px;top:340px;width:38.00px;font-size:10.8px;line-height:14px;color:#111;text-align:right;overflow:hidden"><span style="display:inline-block;transform:scaleX(0.85);transform-origin:100% 50%">100</span></div>
<div class="a" style="left:285.00px;top:340px;width:38.00px;font-size:10.8px;line-height:14px;color:#111;text-align:right;overflow:hidden"><span style="display:inline-block;transform:scaleX(0.85);transform-origin:100% 50%">0.358</span></div>
<div class="a" style="left:325.00px;top:340px;width:37.00px;font-size:10.8px;line-height:14px;color:#111;text-align:right;overflow:hidden"><span style="display:inline-block;transform:scaleX(0.85);transform-origin:100% 50%">8</span></div>
<div class="a" style="left:364.00px;top:340px;width:38.00px;font-size:10.8px;line-height:14px;color:#111;text-align:right;overflow:hidden"><span style="display:inline-block;transform:scaleX(0.85);transform-origin:100% 50%">7</span></div>
<div class="a" style="left:19.00px;top:358px;width:107.00px;font-size:10.8px;line-height:14px;color:#111;overflow:hidden"><span style="display:inline-block;transform:scaleX(0.85);transform-origin:0 50%">'13101000602</span></div>
<div class="a" style="left:127.00px;top:358px;width:39.00px;font-size:10px;line-height:14px;color:#111;overflow:hidden"><span style="display:inline-block;margin-left:1px;letter-spacing:1.4px">東京都</span></div>
<div class="a" style="left:167.00px;top:358px;width:39.00px;font-size:10px;line-height:14px;color:#111;overflow:hidden"><span style="display:inline-block;margin-left:1px;letter-spacing:1.4px">千代田区</span></div>
<div class="a" style="left:207.00px;top:358px;width:38.00px;font-size:10px;line-height:14px;color:#111;overflow:hidden"><span style="display:inline-block;margin-left:1px;letter-spacing:1.4px">永田町(2)</span></div>
<div class="a" style="left:245.00px;top:358px;width:38.00px;font-size:10.8px;line-height:14px;color:#111;text-align:right;overflow:hidden"><span style="display:inline-block;transform:scaleX(0.85);transform-origin:100% 50%">100</span></div>
<div class="a" style="left:285.00px;top:358px;width:38.00px;font-size:10.8px;line-height:14px;color:#111;text-align:right;overflow:hidden"><span style="display:inline-block;transform:scaleX(0.85);transform-origin:100% 50%">0.341</span></div>
<div class="a" style="left:325.00px;top:358px;width:37.00px;font-size:10.8px;line-height:14px;color:#111;text-align:right;overflow:hidden"><span style="display:inline-block;transform:scaleX(0.85);transform-origin:100% 50%">566</span></div>
<div class="a" style="left:364.00px;top:358px;width:38.00px;font-size:10.8px;line-height:14px;color:#111;text-align:right;overflow:hidden"><span style="display:inline-block;transform:scaleX(0.85);transform-origin:100% 50%">340</span></div>
<div class="a" style="left:19.00px;top:376px;width:107.00px;font-size:10.8px;line-height:14px;color:#111;overflow:hidden"><span style="display:inline-block;transform:scaleX(0.85);transform-origin:0 50%">'13101000700</span></div>
<div class="a" style="left:127.00px;top:376px;width:39.00px;font-size:10px;line-height:14px;color:#111;overflow:hidden"><span style="display:inline-block;margin-left:1px;letter-spacing:1.4px">東京都</span></div>
<div class="a" style="left:167.00px;top:376px;width:39.00px;font-size:10px;line-height:14px;color:#111;overflow:hidden"><span style="display:inline-block;margin-left:1px;letter-spacing:1.4px">千代田区</span></div>
<div class="a" style="left:207.00px;top:376px;width:38.00px;font-size:10px;line-height:14px;color:#111;overflow:hidden"><span style="display:inline-block;margin-left:1px;letter-spacing:1.4px">隼町</span></div>
<div class="a" style="left:245.00px;top:376px;width:38.00px;font-size:10.8px;line-height:14px;color:#111;text-align:right;overflow:hidden"><span style="display:inline-block;transform:scaleX(0.85);transform-origin:100% 50%">100</span></div>
<div class="a" style="left:285.00px;top:376px;width:38.00px;font-size:10.8px;line-height:14px;color:#111;text-align:right;overflow:hidden"><span style="display:inline-block;transform:scaleX(0.85);transform-origin:100% 50%">0.112</span></div>
<div class="a" style="left:325.00px;top:376px;width:37.00px;font-size:10.8px;line-height:14px;color:#111;text-align:right;overflow:hidden"><span style="display:inline-block;transform:scaleX(0.85);transform-origin:100% 50%">485</span></div>
<div class="a" style="left:364.00px;top:376px;width:38.00px;font-size:10.8px;line-height:14px;color:#111;text-align:right;overflow:hidden"><span style="display:inline-block;transform:scaleX(0.85);transform-origin:100% 50%">289</span></div>
<div class="a" style="left:17px;top:103px;width:785.5px;height:2px;background:repeating-linear-gradient(90deg,#1d6b40 0 6px,#a9d6bb 6px 7px)"></div>
<div class="a" style="left:17px;top:103px;width:2px;height:279px;background:repeating-linear-gradient(180deg,#1d6b40 0 6px,#a9d6bb 6px 7px)"></div>
<div class="a" style="left:802.5px;top:89px;width:15.5px;height:293px;background:#f6f6f7"></div>
<div class="a" style="left:808px;top:94px;width:0;height:0;border-left:3.5px solid transparent;border-right:3.5px solid transparent;border-bottom:4px solid #555"></div>
<div class="a" style="left:808px;top:102px;width:7px;height:12px;border-radius:3.5px;background:#777"></div>
<div class="a" style="left:808px;top:375px;width:0;height:0;border-left:3.5px solid transparent;border-right:3.5px solid transparent;border-top:4px solid #555"></div>
<div class="a" style="left:0;top:382px;width:819px;height:22px;background:#ededef"></div>
<svg class="a" style="left:18px;top:388px" width="30" height="10" viewBox="0 0 30 10"><path d="M6 1.5 L2.5 5 L6 8.5 M25 1.5 L28.5 5 L25 8.5" fill="none" stroke="#aaa" stroke-width="1"/></svg>
<div class="a" style="left:83px;top:383px;width:52px;height:19px;background:#fff;border-radius:3px"></div>
<div class="a" style="left:90px;top:385px;font-size:10.8px;line-height:14px;color:#3a3a3a">Sheet1</div>
<div class="a" style="left:89px;top:398px;width:38px;height:2px;background:#4f9a6e;border-radius:1px"></div>
<div class="a" style="left:136px;top:386px;width:1px;height:14px;background:#d0d0d0"></div>
<svg class="a" style="left:166px;top:388px" width="10" height="10" viewBox="0 0 10 10"><path d="M5 1 V9 M1 5 H9" stroke="#555" stroke-width="1"/></svg>
<div class="a" style="left:492px;top:389px;width:2px;height:2px;background:#555;border-radius:1px;box-shadow:0 3px 0 #555,0 6px 0 #555"></div>
<div class="a" style="left:505px;top:385px;width:302px;height:15px;background:#fafafa;border-radius:7px"></div>
<div class="a" style="left:508px;top:389px;width:0;height:0;border-top:3.5px solid transparent;border-bottom:3.5px solid transparent;border-right:4px solid #555"></div>
<div class="a" style="left:516px;top:390px;width:254px;height:6px;background:#6f6f6f;border-radius:3px"></div>
<div class="a" style="left:795px;top:389px;width:0;height:0;border-top:3.5px solid transparent;border-bottom:3.5px solid transparent;border-left:5px solid #555"></div>
<div class="a" style="left:0;top:404px;width:819px;height:17px;background:#f8f8f9"></div>
<div class="a" style="left:7px;top:408px;font-size:8.6px;line-height:12px;color:#222"><span style="display:inline-block;transform:scaleX(0.85);transform-origin:0 50%">コピー先を選択し、Enter キーを押すか、貼り付けを選択します。</span></div>
<div class="a" style="left:272px;top:408px;font-size:8px;line-height:11px;color:#222;letter-spacing:0.6px"><span style="display:inline-block;transform:scaleY(1.15);transform-origin:50% 50%">平均: 502.4818545</span></div>
<div class="a" style="left:359px;top:408px;font-size:8px;line-height:11px;color:#222;letter-spacing:0.1px"><span style="display:inline-block;transform:scaleY(1.15);transform-origin:50% 50%">データの個数: 2592</span></div>
<div class="a" style="left:443px;top:408px;font-size:8px;line-height:11px;color:#222;letter-spacing:0.58px"><span style="display:inline-block;transform:scaleY(1.15);transform-origin:50% 50%">合計: 649206.556</span></div>
<svg class="a" style="left:529px;top:408px" width="11" height="10" viewBox="0 0 11 10"><path d="M1 1 H10 V7 H6 M1 1 V7 H3" fill="none" stroke="#333" stroke-width="0.9"/><circle cx="5" cy="7" r="2" fill="none" stroke="#333" stroke-width="0.9"/></svg>
<div class="a" style="left:540px;top:408px;font-size:8px;line-height:11px;color:#222;letter-spacing:0.75px"><span style="display:inline-block;transform:scaleY(1.15);transform-origin:50% 50%">表示設定</span></div>
<div class="a" style="left:590px;top:405px;width:29px;height:15px;background:#e2e2e2;border-radius:2px"></div>
<svg class="a" style="left:599px;top:408px" width="11" height="10" viewBox="0 0 11 10"><path d="M0.5 0.5 H10.5 V9.5 H0.5 Z M0.5 3.5 H10.5 M0.5 6.5 H10.5 M3.8 0.5 V9.5 M7.2 0.5 V9.5" fill="none" stroke="#333" stroke-width="0.9"/></svg>
<svg class="a" style="left:628px;top:408px" width="11" height="10" viewBox="0 0 11 10"><path d="M0.5 0.5 H10.5 V9.5 H0.5 Z M2.5 2.5 H8.5 V7.5 H2.5 Z" fill="none" stroke="#333" stroke-width="0.9"/></svg>
<svg class="a" style="left:656px;top:408px" width="11" height="10" viewBox="0 0 11 10"><path d="M0.5 0.5 H10.5 V9.5 H0.5 Z M4 0.5 V5 H7 V0.5" fill="none" stroke="#333" stroke-width="0.9"/></svg>
<div class="a" style="left:681px;top:412px;width:5px;height:1px;background:#333"></div>
<div class="a" style="left:691px;top:412px;width:71px;height:1px;background:#777"></div>
<div class="a" style="left:725px;top:409px;width:3px;height:8px;background:#444"></div>
<svg class="a" style="left:765px;top:408px" width="7" height="9" viewBox="0 0 7 9"><path d="M3.5 1 V8 M0 4.5 H7" stroke="#333" stroke-width="0.9"/></svg>
<div class="a" style="left:781px;top:406px;font-size:9px;line-height:12px;color:#2a2a2a;letter-spacing:0.3px">100%</div>
</div>
<div class="a" style="left:0;top:0;width:820px;height:422px;border:1.7px solid #72a98a;border-radius:6px"></div>
</div>
<svg class="a" style="left:0;top:0" width="400" height="660" viewBox="0 0 400 660">
<path d="M0 0" fill="#5b9bd5"/>
<path d="M92.5 302.4 Q94.7 291.6 104.3 296.9 L164.6 330.1 Q172.5 334.4 164.8 339.1 L144.2 351.7 C177.3 438.1 236.8 441.5 318.5 433.5 C236 474.2 147.4 456.5 105 371.7 L84.3 378.5 Q76.7 381.0 78.3 373.2 Z" fill="#5b9bd5"/>
<g fill="none" stroke="#5b9bd5" stroke-linecap="round" stroke-linejoin="round">
<path stroke-width="4.1" d="M119.7 547.4 H42.1 Q33.1 547.4 33.1 538.4 V466.5 Q33.1 457.5 42.1 457.5 H153.4 Q162.4 457.5 162.4 466.5 V539.5"/>
<g stroke-width="4.5">
<path d="M69.3 492.9 A11 14.6 0 1 0 69.3 506.4"/>
<ellipse cx="86.3" cy="499.4" rx="10.5" ry="14.6"/>
<path d="M104.8 513.3 V485.3 H114.8 A7.5 7 0 0 1 114.8 499.3 H104.8"/>
<path d="M131 485.5 L138.3 500 L146 485.5 M138.3 500 V513.3"/>
</g>
<path stroke-width="4.6" d="M117.3 520.5 L180.9 553.8 L147.6 561.7 L128.2 590.8 Z M148.8 564.7 L166.4 588.3"/>
</g></svg>
</body></html>
